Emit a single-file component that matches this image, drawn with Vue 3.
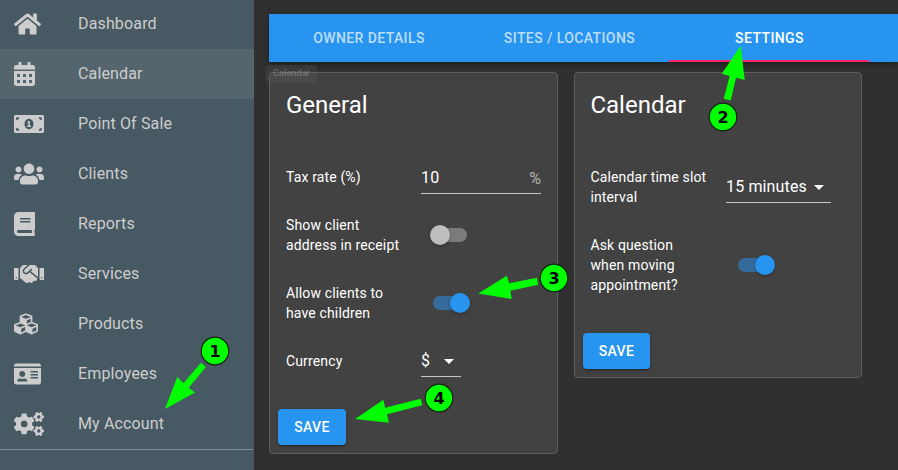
<template>
  <div class="app-layout">
    <!-- Sidebar -->
    <nav class="sidebar">
      <a
        v-for="item in menu"
        :key="item.label"
        href="#"
        class="menu-item"
        :class="{ active: item.label === hovered }"
      >
        <span class="menu-icon">
          <svg :width="item.width * 24 / 512" height="24" :viewBox="`0 0 ${item.width} 512`" fill="currentColor" fill-rule="evenodd">
            <path :d="item.path" />
            <template v-if="item.gear">
              <path :d="item.gear" />
              <path :d="item.gear" transform="translate(0 299)" />
            </template>
          </svg>
        </span>
        <span class="menu-label">{{ item.label }}</span>
      </a>
      <div class="menu-divider"></div>
    </nav>

    <main class="content">
      <!-- Tabs -->
      <div class="tabs">
        <button
          v-for="tab in tabs"
          :key="tab"
          class="tab"
          :class="{ selected: tab === activeTab }"
          @click="activeTab = tab"
        >{{ tab }}</button>
      </div>

      <div class="cards">
        <!-- General -->
        <section class="card general">
          <h2>General</h2>
          <div class="row">
            <label>Tax rate (%)</label>
            <div class="text-field">
              <span>{{ taxRate }}</span>
              <span class="suffix">%</span>
            </div>
          </div>
          <div class="row">
            <label>Show client address in receipt</label>
            <span class="switch" :class="{ on: showAddress }" @click="showAddress = !showAddress"></span>
          </div>
          <div class="row">
            <label>Allow clients to have children</label>
            <span class="switch" :class="{ on: allowChildren }" @click="allowChildren = !allowChildren"></span>
          </div>
          <div class="row">
            <label>Currency</label>
            <div class="select currency">
              <span>$</span>
              <i class="caret"></i>
            </div>
          </div>
          <button class="save">SAVE</button>
          <span class="drag-label">Calendar</span>
        </section>

        <!-- Calendar -->
        <section class="card calendar">
          <h2>Calendar</h2>
          <div class="row">
            <label>Calendar time slot interval</label>
            <div class="select interval">
              <span>15 minutes</span>
              <i class="caret"></i>
            </div>
          </div>
          <div class="row">
            <label>Ask question when moving appointment?</label>
            <span class="switch" :class="{ on: askQuestion }" @click="askQuestion = !askQuestion"></span>
          </div>
          <button class="save">SAVE</button>
        </section>
      </div>
    </main>

    <!-- Step markers -->
    <svg class="steps" width="898" height="470" viewBox="0 0 898 470">
      <g v-for="(step, i) in steps" :key="i">
        <polygon :points="step.arrow" fill="#00ff00" />
        <circle :cx="step.x" :cy="step.y" r="13.8" fill="#00ff00" stroke="#10240f" stroke-width="1.2" />
        <text :x="step.x" :y="step.y + 6" text-anchor="middle">{{ i + 1 }}</text>
      </g>
    </svg>
  </div>
</template>

<script setup>
import { ref } from 'vue'

const hovered = ref('Calendar')
const activeTab = ref('SETTINGS')
const taxRate = ref(10)
const showAddress = ref(false)
const allowChildren = ref(true)
const askQuestion = ref(true)

const tabs = ['OWNER DETAILS', 'SITES / LOCATIONS', 'SETTINGS']

const menu = [
  {
    label: 'Dashboard',
    width: 576,
    path: 'M280.37 148.26L96 300.11V464a16 16 0 0 0 16 16l112.06-.29a16 16 0 0 0 15.92-16V368a16 16 0 0 1 16-16h64a16 16 0 0 1 16 16v95.64a16 16 0 0 0 16 16.05L464 480a16 16 0 0 0 16-16V300L295.67 148.26a12.19 12.19 0 0 0-15.3 0zM571.6 251.47L488 182.56V44.05a12 12 0 0 0-12-12h-56a12 12 0 0 0-12 12v72.61L318.47 43a48 48 0 0 0-61 0L4.34 251.47a12 12 0 0 0-1.6 16.9l25.5 31A12 12 0 0 0 45.15 301l235.22-193.74a12.19 12.19 0 0 1 15.3 0L530.9 301a12 12 0 0 0 16.9-1.6l25.5-31a12 12 0 0 0-1.7-16.93z'
  },
  {
    label: 'Calendar',
    width: 448,
    path: 'M0 464c0 26.5 21.5 48 48 48h352c26.5 0 48-21.5 48-48V192H0zM64 256h64v64H64zM192 256h64v64h-64zM320 256h64v64h-64zM64 384h64v64H64zM192 384h64v64h-64zM320 384h64v64h-64zM400 64h-48V16c0-8.8-7.2-16-16-16h-32c-8.8 0-16 7.2-16 16v48H160V16c0-8.8-7.2-16-16-16h-32c-8.8 0-16 7.2-16 16v48H48C21.5 64 0 85.5 0 112v48h448v-48c0-26.5-21.5-48-48-48z'
  },
  {
    label: 'Point Of Sale',
    width: 640,
    path: 'M352 288h-16v-88c0-4.42-3.58-8-8-8h-13.58c-4.74 0-9.37 1.4-13.31 4.03l-15.33 10.22a7.994 7.994 0 0 0-2.22 11.09l8.88 13.31a7.994 7.994 0 0 0 11.09 2.22l.47-.31V288h-16c-4.42 0-8 3.58-8 8v16c0 4.42 3.58 8 8 8h64c4.42 0 8-3.58 8-8v-16c0-4.42-3.58-8-8-8zM608 64H32C14.33 64 0 78.33 0 96v320c0 17.67 14.33 32 32 32h576c17.67 0 32-14.33 32-32V96c0-17.67-14.33-32-32-32zM48 400v-64c35.35 0 64 28.65 64 64H48zm0-224v-64h64c0 35.35-28.65 64-64 64zm272 192c-53.02 0-96-50.15-96-112 0-61.86 42.98-112 96-112s96 50.14 96 112c0 61.87-43 112-96 112zm272 32h-64c0-35.35 28.65-64 64-64v64zm0-224c-35.35 0-64-28.65-64-64h64v64z'
  },
  {
    label: 'Clients',
    width: 640,
    path: 'M96 224c35.3 0 64-28.7 64-64s-28.7-64-64-64-64 28.7-64 64 28.7 64 64 64zm448 0c35.3 0 64-28.7 64-64s-28.7-64-64-64-64 28.7-64 64 28.7 64 64 64zm32 32h-64c-17.6 0-33.5 7.1-45.1 18.6 40.3 22.1 68.9 62 75.1 109.4h66c17.7 0 32-14.3 32-32v-32c0-35.3-28.7-64-64-64zm-256 0c61.9 0 112-50.1 112-112S381.9 32 320 32 208 82.1 208 144s50.1 112 112 112zm76.8 32h-8.3c-20.8 10-43.9 16-68.5 16s-47.6-6-68.5-16h-8.3C179.6 288 128 339.6 128 403.2V432c0 26.5 21.5 48 48 48h288c26.5 0 48-21.5 48-48v-28.8c0-63.6-51.6-115.2-115.2-115.2zm-223.7-13.4C161.5 263.1 145.6 256 128 256H64c-35.3 0-64 28.7-64 64v32c0 17.7 14.3 32 32 32h65.9c6.3-47.4 34.9-87.3 75.2-109.4z'
  },
  {
    label: 'Reports',
    width: 448,
    path: 'M448 360V24c0-13.3-10.7-24-24-24H96C43 0 0 43 0 96v320c0 53 43 96 96 96h328c13.3 0 24-10.7 24-24v-16c0-7.5-3.5-14.3-8.9-18.7-4.2-15.4-4.2-59.3 0-74.7 5.4-4.3 8.9-11.1 8.9-18.6zM128 134c0-3.3 2.7-6 6-6h212c3.3 0 6 2.7 6 6v20c0 3.3-2.7 6-6 6H134c-3.3 0-6-2.7-6-6v-20zm0 64c0-3.3 2.7-6 6-6h212c3.3 0 6 2.7 6 6v20c0 3.3-2.7 6-6 6H134c-3.3 0-6-2.7-6-6v-20zm253.4 250H96c-17.7 0-32-14.3-32-32 0-17.6 14.4-32 32-32h285.4c-1.9 17.1-1.9 46.9 0 64z'
  },
  {
    label: 'Services',
    width: 640,
    path: 'M434.7 64h-85.9c-8 0-15.7 3-21.6 8.4l-98.3 90c-.1.1-.2.3-.3.4-16.6 15.6-16.3 40.5-2.1 56 12.7 13.9 39.4 17.6 56.1 2.7.1-.1.3-.1.4-.2l79.9-73.2c6.5-5.9 16.7-5.5 22.6 1 6 6.5 5.5 16.6-1 22.6l-26.1 23.9L504 313.8c2.9 2.4 5.5 5 7.9 7.7V128l-54.6-54.6c-5.9-6-14.1-9.4-22.6-9.4zM544 128.2v223.9c0 17.7 14.3 32 32 32h64V128.2h-96zm48 223.9c-8.8 0-16-7.2-16-16s7.2-16 16-16 16 7.2 16 16-7.2 16-16 16zM0 384h64c17.7 0 32-14.3 32-32V128.2H0V384zm48-63.9c8.8 0 16 7.2 16 16s-7.2 16-16 16-16-7.2-16-16c0-8.9 7.2-16 16-16zm435.9 18.6L334.6 217.5l-30 27.5c-29.7 27.1-75.2 24.5-101.7-4.4-26.9-29.4-24.8-74.9 4.4-101.7L289.1 64h-83.8c-8.5 0-16.6 3.4-22.6 9.4L128 128v223.9h18.3l90.5 81.9c27.4 22.3 67.7 18.1 90-9.3l.2-.2 17.9 15.5c15.9 13 39.4 10.5 52.3-5.4l31.4-38.6 5.4 4.4c13.7 11.1 33.9 9.1 45-4.7l9.5-11.7c11.2-13.8 9.1-33.9-4.6-45.1z'
  },
  {
    label: 'Products',
    width: 512,
    path: 'M488.6 250.2L392 214V105.5c0-15-9.3-28.4-23.4-33.7l-100-37.5c-8.1-3.1-17.1-3.1-25.3 0l-100 37.5c-14.1 5.3-23.4 18.7-23.4 33.7V214l-96.6 36.2C9.3 255.5 0 268.9 0 283.9V394c0 13.6 7.7 26.1 19.9 32.2l100 50c10.1 5.1 22.1 5.1 32.2 0l103.9-52 103.9 52c10.1 5.1 22.1 5.1 32.2 0l100-50c12.2-6.1 19.9-18.6 19.9-32.2V283.9c0-15-9.3-28.4-23.4-33.7zM358 214.8l-85 31.9v-68.2l85-37v73.3zM154 104.1l102-38.2 102 38.2v.6l-102 41.4-102-41.4v-.6zm84 291.1l-85 42.5v-79.1l85-38.8v75.4zm0-112l-102 41.4-102-41.4v-.6l102-38.2 102 38.2v.6zm240 112l-85 42.5v-79.1l85-38.8v75.4zm0-112l-102 41.4-102-41.4v-.6l102-38.2 102 38.2v.6z'
  },
  {
    label: 'Employees',
    width: 576,
    path: 'M528 32H48C21.5 32 0 53.5 0 80v16h576V80c0-26.5-21.5-48-48-48zM0 432c0 26.5 21.5 48 48 48h480c26.5 0 48-21.5 48-48V128H0v304zM352 192h160v32H352zM352 256h160v32H352zM352 320h160v32H352zM176 192c35.3 0 64 28.7 64 64s-28.7 64-64 64-64-28.7-64-64 28.7-64 64-64zM67.1 396.2C75.5 370.5 99.6 352 128 352h8.2c12.3 5.1 25.7 8 39.8 8s27.6-2.9 39.8-8h8.2c28.4 0 52.5 18.5 60.9 44.2 3.2 9.9-5.2 19.8-15.6 19.8H82.7c-10.4 0-18.8-10-15.6-19.8z'
  },
  {
    label: 'My Account',
    width: 640,
    path: 'M386.3 286.1l33.7 16.8c10.1 5.8 14.5 18.1 10.5 29.1-8.9 24.2-26.4 46.4-42.6 65.8-7.4 8.9-20.2 11.1-30.3 5.3l-29.1-16.8c-16 13.7-34.6 24.6-54.9 31.7v33.6c0 11.6-8.3 21.6-19.7 23.6-24.6 4.2-50.4 4.4-75.9 0-11.5-2-20-11.9-20-23.6V418c-20.3-7.2-38.9-18-54.9-31.7L74 403c-10 5.8-22.9 3.6-30.3-5.3-16.2-19.4-33.3-41.6-42.2-65.7-4-10.9.4-23.2 10.5-29.1l33.3-16.8c-3.9-20.9-3.9-42.4 0-63.4L12 205.8c-10.1-5.8-14.6-18.1-10.5-29 8.9-24.2 26-46.4 42.2-65.8 7.4-8.9 20.2-11.1 30.3-5.3l29.1 16.8c16-13.7 34.6-24.6 54.9-31.7V57.1c0-11.5 8.2-21.5 19.6-23.5 24.6-4.2 50.5-4.4 76-.1 11.5 2 20 11.9 20 23.6v33.6c20.3 7.2 38.9 18 54.9 31.7l29.1-16.8c10-5.8 22.9-3.6 30.3 5.3 16.2 19.4 33.2 41.6 42.1 65.8 4 10.9.1 23.2-10 29.1l-33.7 16.8c3.9 21 3.9 42.5 0 63.5zm-117.6 21.1c59.2-77-28.7-164.9-105.7-105.7-59.2 77 28.7 164.9 105.7 105.7z',
    gear: 'M512.1 191l-8.2 14.3c-3 5.3-9.4 7.5-15.1 5.4-11.8-4.4-22.6-10.7-32.1-18.6-4.6-3.8-5.8-10.5-2.8-15.7l8.2-14.3c-6.9-8-12.3-17.3-15.9-27.4h-16.5c-6 0-11.2-4.3-12.2-10.3-2-12-2.1-24.6 0-37.1 1-6 6.2-10.4 12.2-10.4h16.5c3.6-10.1 9-19.4 15.9-27.4l-8.2-14.3c-3-5.2-1.9-11.9 2.8-15.7 9.5-7.9 20.4-14.2 32.1-18.6 5.7-2.1 12.1.1 15.1 5.4l8.2 14.3c10.5-1.9 21.2-1.9 31.7 0L552 6.3c3-5.3 9.4-7.5 15.1-5.4 11.8 4.4 22.6 10.7 32.1 18.6 4.6 3.8 5.8 10.5 2.8 15.7l-8.2 14.3c6.9 8 12.3 17.3 15.9 27.4h16.5c6 0 11.2 4.3 12.2 10.3 2 12 2.1 24.6 0 37.1-1 6-6.2 10.4-12.2 10.4h-16.5c-3.6 10.1-9 19.4-15.9 27.4l8.2 14.3c3 5.2 1.9 11.9-2.8 15.7-9.5 7.9-20.4 14.2-32.1 18.6-5.7 2.1-12.1-.1-15.1-5.4l-8.2-14.3c-10.4 1.9-21.2 1.9-31.7 0zm-10.5-58.8c38.5 29.6 82.4-14.3 52.8-52.8-38.5-29.7-82.4 14.3-52.8 52.8z'
  }
]

const steps = [
  { x: 215, y: 351, arrow: '165,409 177.3,377 183.4,383.3 201,362.7 206,366.9 188.7,387.7 195,392.5' },
  { x: 723, y: 117, arrow: '740.7,46 721.7,73.7 729.7,76 723.7,98.7 730.7,100.5 736,77.7 744.7,80' },
  { x: 554, y: 278, arrow: '478.3,293.5 506.7,275.7 509.3,283.3 537,277.7 538.2,284.7 510.3,290.7 511.7,299' },
  { x: 439, y: 398, arrow: '355.2,419 383.3,399.7 385.2,407.7 420.7,398.7 422.2,405.3 387,414.3 389,422.7' }
]
</script>

<style>
body {
  background: #303030;
  overflow: hidden;
}
</style>

<style scoped>
.app-layout {
  position: relative;
  display: flex;
  width: 898px;
  height: 470px;
  overflow: hidden;
  background: #303030;
  color: #fff;
  font-family: Roboto, sans-serif;
}

/* Sidebar */
.sidebar {
  width: 254px;
  flex-shrink: 0;
  background: #475962;
  margin-top: -1px;
}

.menu-item {
  display: flex;
  align-items: center;
  box-sizing: border-box;
  height: 50px;
  padding: 0 0 2px 14px;
  color: #cdcdcd;
  text-decoration: none;
}

.menu-item.active {
  background: #54656d;
}

.menu-icon {
  display: flex;
  width: 64px;
  padding-top: 2px;
}

.menu-label {
  font-size: 16px;
  letter-spacing: 0.15px;
}

.menu-divider {
  height: 1px;
  margin-right: 1px;
  background: #7c8a91;
}

.content {
  flex: 1;
  padding: 14px 0 0 15px;
}

/* Tabs */
.tabs {
  display: flex;
  height: 48px;
  background: #2794f0;
  box-shadow: 0 2px 4px -1px rgba(0, 0, 0, 0.2), 0 4px 5px rgba(0, 0, 0, 0.14), 0 1px 10px rgba(0, 0, 0, 0.12);
}

.tab {
  width: 200px;
  padding: 2px 0 0 1px;
  border: none;
  border-bottom: 2px solid transparent;
  background: none;
  color: rgba(255, 255, 255, 0.7);
  font-family: inherit;
  font-size: 14px;
  font-weight: 500;
  letter-spacing: 0.4px;
}

.tab:first-child {
  padding-left: 0;
}

.tab.selected {
  color: #fff;
  border-bottom-color: #f8286f;
}

/* Cards */
.cards {
  display: flex;
  align-items: flex-start;
  gap: 16px;
  margin-top: 10px;
}

.card {
  position: relative;
  box-sizing: border-box;
  padding: 0 8px 8px;
  border: 1px solid #5e5e5e;
  border-radius: 4px;
  background: #424242;
}

.general {
  width: 289px;
}

.calendar {
  width: 288px;
}

.card h2 {
  margin: 0 0 16px;
  padding-left: 8px;
  font-size: 24px;
  font-weight: 400;
  line-height: 64px;
}

.calendar h2 {
  padding-left: 7.4px;
}

.row {
  display: flex;
  align-items: center;
  padding: 14px 8px;
}

.row label {
  width: 118px;
  margin-right: 17px;
  font-size: 14px;
  line-height: 20px;
  letter-spacing: 0.14px;
}

.calendar .row label {
  margin-left: -0.6px;
  margin-right: 17.6px;
}

.text-field,
.select {
  display: flex;
  align-items: center;
  box-sizing: border-box;
  margin: -7px 0;
  border-bottom: 1px solid #c6c6c6;
  font-size: 16px;
  letter-spacing: 0.15px;
}

.text-field {
  width: 120px;
  height: 33px;
  padding-top: 2px;
  justify-content: space-between;
}

.suffix {
  padding-top: 2px;
  color: #b3b3b3;
}

.select {
  height: 32px;
  justify-content: space-between;
  padding-right: 7px;
}

.currency {
  width: 40px;
}

.interval {
  width: 105px;
}

.caret {
  margin-top: 1px;
  border: 5px solid transparent;
  border-top-color: #fff;
  border-bottom: none;
}

/* Switch */
.switch {
  position: relative;
  width: 34px;
  height: 14px;
  margin-left: 12px;
  border-radius: 7px;
  background: #7b7b7b;
}

.switch::after {
  content: '';
  position: absolute;
  top: -3px;
  left: -3px;
  width: 20px;
  height: 20px;
  border-radius: 50%;
  background: #bdbdbd;
  box-shadow: 0 1px 3px rgba(0, 0, 0, 0.3);
}

.switch.on {
  background: #346b9a;
}

.switch.on::after {
  left: 17px;
  background: #2794f0;
}

.save {
  display: block;
  height: 36px;
  width: 68px;
  margin-top: 24px;
  padding: 0;
  border: none;
  border-radius: 4px;
  background: #2794f0;
  color: #fff;
  font-family: inherit;
  font-size: 14px;
  font-weight: 500;
  letter-spacing: 0.4px;
  box-shadow: 0 3px 1px -2px rgba(0, 0, 0, 0.2), 0 2px 2px rgba(0, 0, 0, 0.14), 0 1px 5px rgba(0, 0, 0, 0.12);
}

.calendar .save {
  width: 67px;
}

/* Fading tooltip over the card corner */
.drag-label {
  position: absolute;
  top: -8px;
  left: -4px;
  width: 51px;
  height: 18px;
  border-radius: 4px;
  background: rgba(97, 97, 97, 0.25);
  color: rgba(255, 255, 255, 0.25);
  font-size: 9px;
  font-weight: 500;
  line-height: 17px;
  letter-spacing: 0.1px;
  text-align: center;
}

/* Step markers */
.steps {
  position: absolute;
  top: 0;
  left: 0;
  pointer-events: none;
}

.steps text {
  font-family: 'DejaVu Sans', sans-serif;
  font-size: 16px;
  font-weight: 700;
  fill: #000;
}
</style>
